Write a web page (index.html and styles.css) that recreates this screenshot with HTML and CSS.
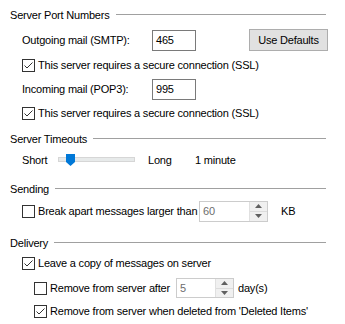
FILE: index.html
```html
<!DOCTYPE html>
<html>
<head>
<meta charset="utf-8">
<link rel="stylesheet" href="styles.css">
</head>
<body>
<div class="page">
  <div class="row title t1"><span>Server Port Numbers</span><span class="rule"></span></div>
  <div class="row ind r2">
    <span class="lbl port-lbl">Outgoing mail (SMTP):</span>
    <div class="textbox">465</div>
    <div class="btn">Use Defaults</div>
  </div>
  <div class="row ind r3">
    <span class="cb checked"><svg width="13" height="13" viewBox="0 0 13 13"><rect x="0.5" y="0.5" width="12" height="12" fill="#fff" stroke="#333"/><path d="M2.5 6.5 L5 9 L10.5 3.5" fill="none" stroke="#333" stroke-width="1"/></svg></span>
    <span class="cb-text">This server requires a secure connection (SSL)</span>
  </div>
  <div class="row ind r4">
    <span class="lbl port-lbl">Incoming mail (POP3):</span>
    <div class="textbox">995</div>
  </div>
  <div class="row ind r5">
    <span class="cb checked"><svg width="13" height="13" viewBox="0 0 13 13"><rect x="0.5" y="0.5" width="12" height="12" fill="#fff" stroke="#333"/><path d="M2.5 6.5 L5 9 L10.5 3.5" fill="none" stroke="#333" stroke-width="1"/></svg></span>
    <span class="cb-text">This server requires a secure connection (SSL)</span>
  </div>

  <div class="row title t2"><span>Server Timeouts</span><span class="rule"></span></div>
  <div class="row ind r7">
    <span class="short">Short</span>
    <div class="slider">
      <div class="track"></div>
      <svg class="thumb" width="9" height="12" viewBox="0 0 9 12"><path d="M0 0 H9 V8 L4.5 12 L0 8 Z" fill="#0078d7"/></svg>
    </div>
    <span class="long">Long</span>
    <span>1 minute</span>
  </div>

  <div class="row title t3"><span>Sending</span><span class="rule"></span></div>
  <div class="row ind r9">
    <span class="cb"><svg width="13" height="13" viewBox="0 0 13 13"><rect x="0.5" y="0.5" width="12" height="12" fill="#fff" stroke="#333"/></svg></span>
    <span class="cb-text break-lbl">Break apart messages larger than</span>
    <div class="spin spin-kb">
      <span class="spin-val">60</span>
      <div class="spin-btns">
        <div class="sb up"><svg width="7" height="4" viewBox="0 0 7 4"><path d="M0 4 L3.5 0 L7 4 Z" fill="#606060"/></svg></div>
        <div class="sb down"><svg width="7" height="4" viewBox="0 0 7 4"><path d="M0 0 L3.5 4 L7 0 Z" fill="#606060"/></svg></div>
      </div>
    </div>
    <span class="kb">KB</span>
  </div>

  <div class="row title t4"><span>Delivery</span><span class="rule"></span></div>
  <div class="row ind r11">
    <span class="cb checked"><svg width="13" height="13" viewBox="0 0 13 13"><rect x="0.5" y="0.5" width="12" height="12" fill="#fff" stroke="#333"/><path d="M2.5 6.5 L5 9 L10.5 3.5" fill="none" stroke="#333" stroke-width="1"/></svg></span>
    <span class="cb-text">Leave a copy of messages on server</span>
  </div>
  <div class="row ind2 r12">
    <span class="cb"><svg width="13" height="13" viewBox="0 0 13 13"><rect x="0.5" y="0.5" width="12" height="12" fill="#fff" stroke="#333"/></svg></span>
    <span class="cb-text remove-lbl">Remove from server after</span>
    <div class="spin spin-days">
      <span class="spin-val">5</span>
      <div class="spin-btns">
        <div class="sb up"><svg width="7" height="4" viewBox="0 0 7 4"><path d="M0 4 L3.5 0 L7 4 Z" fill="#606060"/></svg></div>
        <div class="sb down"><svg width="7" height="4" viewBox="0 0 7 4"><path d="M0 0 L3.5 4 L7 0 Z" fill="#606060"/></svg></div>
      </div>
    </div>
    <span class="days">day(s)</span>
  </div>
  <div class="row ind2 r13">
    <span class="cb checked"><svg width="13" height="13" viewBox="0 0 13 13"><rect x="0.5" y="0.5" width="12" height="12" fill="#fff" stroke="#333"/><path d="M2.5 6.5 L5 9 L10.5 3.5" fill="none" stroke="#333" stroke-width="1"/></svg></span>
    <span class="cb-text">Remove from server when deleted from 'Deleted Items'</span>
  </div>
</div>
</body>
</html>
```
FILE: styles.css
```css
html, body {
  margin: 0;
  padding: 0;
  background: #ffffff;
}
body {
  font-family: "Liberation Sans", Arial, sans-serif;
  font-size: 11px;
  letter-spacing: -0.2px;
  color: #000;
}
.page {
  width: 345px;
  height: 324px;
  box-sizing: border-box;
  padding: 5px 19px 0 10px;
  overflow: hidden;
}
.row {
  display: flex;
  align-items: center;
  height: 20px;
  white-space: nowrap;
}
.ind { padding-left: 12px; }
.ind2 { padding-left: 24px; }

.title .rule {
  flex: 1;
  height: 1px;
  background: #a0a0a0;
  margin-left: 6px;
  margin-top: -1px;
}

.r2 { margin-top: 5px; }
.r3 { margin-top: 5px; }
.r4 { margin-top: 4px; }
.r5 { margin-top: 4px; }
.t2 { margin-top: 6px; }
.r7 { margin-top: 1px; }
.t3 { margin-top: 9px; }
.r9 { margin-top: 2px; }
.t4 { margin-top: 12px; }
.r11 { margin-top: 0; }
.r12 { margin-top: 5px; }
.r13 { margin-top: 3px; }

.port-lbl { width: 130px; }
.textbox {
  box-sizing: border-box;
  width: 44px;
  height: 21px;
  border: 1px solid #7a7a7a;
  padding: 0 3px;
  line-height: 19px;
  background: #fff;
}
.btn {
  box-sizing: border-box;
  margin-left: auto;
  margin-right: -2px;
  width: 79px;
  height: 22px;
  border: 1px solid #adadad;
  background: #e1e1e1;
  text-align: center;
  line-height: 20px;
}

.cb {
  width: 13px;
  height: 13px;
  display: flex;
  flex: none;
}
.cb svg { display: block; }
.cb-text { margin-left: 3px; }

.short { width: 36px; }
.slider {
  position: relative;
  width: 77px;
  height: 12px;
}
.track {
  position: absolute;
  left: 0;
  right: 0;
  top: 3px;
  height: 5px;
  box-sizing: border-box;
  background: #e7eaea;
  border: 1px solid #d6d6d6;
}
.thumb {
  position: absolute;
  left: 8px;
  top: 0;
}
.long {
  margin-left: 13px;
  width: 47px;
}

.break-lbl { width: 161px; }
.remove-lbl { width: 126px; }

.spin {
  box-sizing: border-box;
  display: flex;
  height: 21px;
  border: 1px solid #cccccc;
  background: #fff;
}
.spin-kb { width: 69px; }
.spin-days { width: 58px; height: 20px; }
.spin-val {
  flex: 1;
  color: #6d6d6d;
  padding-left: 3px;
  line-height: 19px;
}
.spin-days .spin-val { line-height: 18px; }
.spin-btns {
  width: 17px;
  display: flex;
  flex-direction: column;
  border-left: 1px solid #e0e0e0;
}
.sb {
  flex: 1;
  display: flex;
  align-items: center;
  justify-content: center;
  background: #f0f0f0;
}
.sb.up { border-bottom: 1px solid #dcdcdc; }
.sb svg { display: block; }
.kb { margin-left: 13px; }
.days { margin-left: 4px; }
```
